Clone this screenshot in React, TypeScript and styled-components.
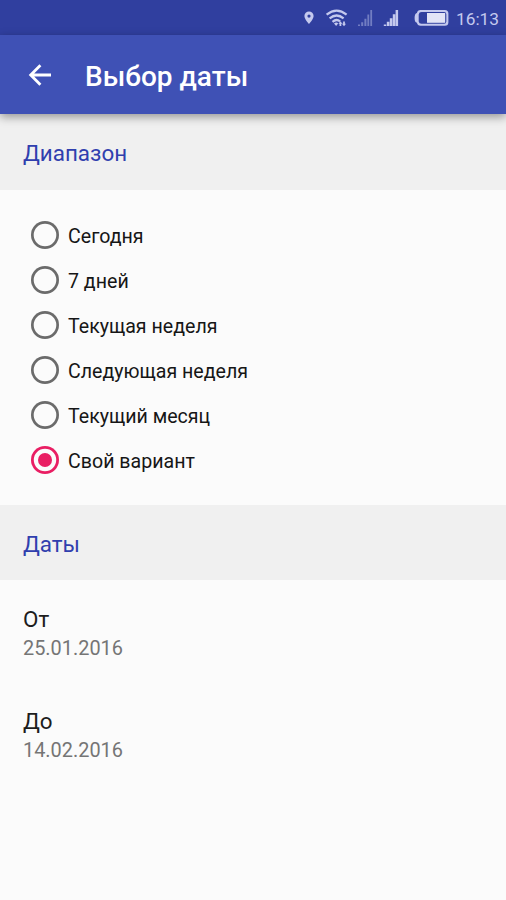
import React, { useState } from 'react';
import styled, { createGlobalStyle } from 'styled-components';

const GlobalStyle = createGlobalStyle`
  *, *::before, *::after { box-sizing: border-box; }
  body { margin: 0; background: #fbfbfb; font-family: Roboto, sans-serif; }
`;

const Screen = styled.main`
  display: flex;
  flex-direction: column;
  height: 900px;
  background: #fbfbfb;
  overflow: hidden;
`;

const StatusBar = styled.div`
  display: flex;
  align-items: center;
  justify-content: flex-end;
  flex: none;
  height: 35px;
  padding-right: 8px;
  background: #303f9f;
  color: #c4c9ee;
`;

const StatusIcons = styled.svg`
  display: block;
  flex: none;
  margin-right: 6px;
`;

const Clock = styled.span`
  width: 42px;
  padding-top: 3px;
  font-size: 17.3px;
  line-height: 20px;
  white-space: nowrap;
`;

const AppBar = styled.header`
  display: flex;
  align-items: center;
  flex: none;
  height: 79px;
  padding-left: 28px;
  background: #3f51b5;
  color: #fff;
  box-shadow: 0 3px 9px rgba(0, 0, 0, 0.38);
  z-index: 1;
`;

const BackButton = styled.button`
  display: flex;
  width: 57px;
  padding: 0;
  border: 0;
  background: none;
  color: inherit;
`;

const Title = styled.h1`
  margin: 4px 0 0;
  font-size: 28px;
  font-weight: 500;
  line-height: 34px;
`;

const SectionHeader = styled.h2<{ $height: number }>`
  display: flex;
  align-items: center;
  flex: none;
  height: ${(p) => p.$height}px;
  margin: 0;
  padding: 2px 23px 0;
  background: #f0f0f0;
  color: #303fae;
  font-size: 22.4px;
  font-weight: 400;
`;

const Options = styled.div`
  display: flex;
  flex-direction: column;
  flex: none;
  height: 315px;
  padding: 22px 31px 0;
`;

const Option = styled.label`
  display: flex;
  align-items: center;
  gap: 9px;
  height: 45px;
  color: #161616;
`;

const OptionInput = styled.input`
  appearance: none;
  flex: none;
  display: grid;
  place-items: center;
  width: 28px;
  height: 28px;
  margin: 0;
  border-radius: 50%;
  box-shadow: inset 0 0 0 2.7px #6b6b6b;

  &:checked { box-shadow: inset 0 0 0 2.8px #e91e63; }
  &:checked::before {
    content: '';
    width: 14px;
    height: 14px;
    border-radius: 50%;
    background: #e91e63;
  }
`;

const OptionText = styled.span`
  padding-top: 4px;
  font-size: 19.6px;
  line-height: 24px;
`;

const Dates = styled.div`
  display: flex;
  flex-direction: column;
  gap: 46px;
  padding: 25px 23px 0;
`;

const DateEntry = styled.div`
  display: flex;
  flex-direction: column;
  height: 56px;
`;

const DateLabel = styled.span`
  font-size: 22.4px;
  line-height: 29px;
  color: #1d1d1d;
`;

const DateValue = styled.span`
  font-size: 19.9px;
  line-height: 29px;
  color: #757575;
`;

const ranges = ['Сегодня', '7 дней', 'Текущая неделя', 'Следующая неделя', 'Текущий месяц', 'Свой вариант'];
const dates = [
  { label: 'От', value: '25.01.2016' },
  { label: 'До', value: '14.02.2016' },
];

function StatusGlyphs() {
  return (
    <StatusIcons width="150" height="35" viewBox="300 0 150 35" fill="currentColor">
      <path fillRule="evenodd" d="M309 11.5a4.6 4.6 0 0 0-4.6 4.6c0 3.2 4.6 8 4.6 8s4.6-4.8 4.6-8a4.6 4.6 0 0 0-4.6-4.6Zm0 3a1.6 1.6 0 1 1 0 3.2 1.6 1.6 0 0 1 0-3.2Z" />
      <g fill="none" stroke="currentColor" strokeWidth="2.2">
        <path d="M326.6 14.6q10-8 20 0M329.6 18.3q7-5.6 14 0M332.5 21.8q4-3.4 7.6-.4" />
      </g>
      <path d="M334 23.4q2.4-2 4.2 0l-2.1 2.7zM340.4 21.3l2 2.4h-1.1V26h-1.8v-2.3h-1.1zM344 26.2l-2-2.5h1.1v-2.2h1.8v2.2h1.1z" />
      <g opacity="0.45">
        <path d="M358 24.5h2V26h-2zM361.2 22.2h2V26h-2zM364.4 18.8h2V26h-2zM367.4 14.5h1.8V26h-1.8zM370.3 10h1.8v16h-1.8z" />
      </g>
      <path d="M383.8 24.5h2.4V26h-2.4zM386.8 21.8h2.6V26h-2.6zM389.8 18.3h2.6V26h-2.6zM392.8 14.3h2.5V26h-2.5zM395.6 10h2.5v16h-2.5z" />
      <path
        fillRule="evenodd"
        d="M420.5 10h24.3a3.6 3.6 0 0 1 3.6 3.6v8.6a3.6 3.6 0 0 1-3.6 3.6h-24.3q-3 0-3.6-3-2.3-.6-2.3-4.9t2.3-4.9q.6-3 3.6-3Zm1 2q-2.5 0-2.8 2.4v7q.3 2.4 2.8 2.4h22.6a2.2 2.2 0 0 0 2.2-2.2v-7.4a2.2 2.2 0 0 0-2.2-2.2Z"
      />
      <path d="M427 13h18.2v9.8H427z" fill="#e2e4f6" />
    </StatusIcons>
  );
}

export default function App() {
  const [selected, setSelected] = useState('Свой вариант');
  return (
    <>
      <GlobalStyle />
      <Screen>
        <StatusBar>
          <StatusGlyphs />
          <Clock>16:13</Clock>
        </StatusBar>
        <AppBar>
          <BackButton aria-label="Назад">
            <svg width="25" height="24" viewBox="0 0 25 24" fill="none" stroke="currentColor" strokeWidth="2.8">
              <path d="M12.4 2.2 2.7 12l9.7 9.8M2.5 12H23" />
            </svg>
          </BackButton>
          <Title>Выбор даты</Title>
        </AppBar>
        <SectionHeader $height={76}>Диапазон</SectionHeader>
        <Options role="radiogroup">
          {ranges.map((range) => (
            <Option key={range}>
              <OptionInput type="radio" name="range" checked={selected === range} onChange={() => setSelected(range)} />
              <OptionText>{range}</OptionText>
            </Option>
          ))}
        </Options>
        <SectionHeader $height={75}>Даты</SectionHeader>
        <Dates>
          {dates.map((date) => (
            <DateEntry key={date.label}>
              <DateLabel>{date.label}</DateLabel>
              <DateValue>{date.value}</DateValue>
            </DateEntry>
          ))}
        </Dates>
      </Screen>
    </>
  );
}
